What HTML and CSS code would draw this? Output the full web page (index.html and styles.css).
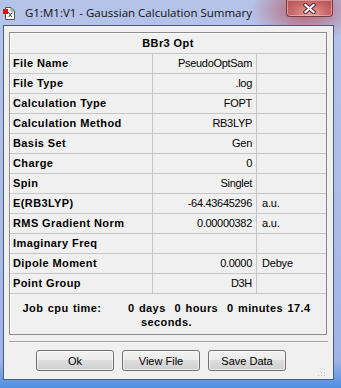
FILE: index.html
```html
<!DOCTYPE html>
<html lang="en">
<head>
  <meta charset="UTF-8">
  <title>G1:M1:V1 - Gaussian Calculation Summary</title>
  <link rel="stylesheet" href="styles.css">
</head>
<body>
  <div class="window">
    <div class="titlebar">
      <svg class="app-icon" width="12" height="13" viewBox="0 0 12 13">
        <path d="M2.5 0.5 H8 L11.5 4 V12.5 H2.5 Z" fill="#fff" stroke="#555" stroke-width="1"/>
        <path d="M8 0.5 V4 H11.5" fill="none" stroke="#777" stroke-width="1"/>
        <path d="M5 5 L7 7.5 L9.5 6 M7 7.5 L6 10 M7 7.5 L9 10" fill="none" stroke="#444" stroke-width="1"/>
        <rect x="0" y="2" width="5" height="5" fill="#e01010"/>
      </svg>
      <span class="title">G1:M1:V1 - Gaussian Calculation Summary</span>
      <div class="close-btn">
        <svg width="13" height="11" viewBox="0 0 13 11">
          <path d="M2.5 2 L10.5 9 M10.5 2 L2.5 9" stroke="#4a2a2a" stroke-width="4.2" stroke-linecap="square"/>
          <path d="M2.5 2 L10.5 9 M10.5 2 L2.5 9" stroke="#fff" stroke-width="2.2" stroke-linecap="square"/>
        </svg>
      </div>
    </div>

    <div class="client">
      <div class="summary">
        <div class="summary-head">BBr3 Opt</div>
        <div class="row"><div class="key">File Name</div><div class="val">PseudoOptSam</div><div class="unit"></div></div>
        <div class="row"><div class="key">File Type</div><div class="val">.log</div><div class="unit"></div></div>
        <div class="row"><div class="key">Calculation Type</div><div class="val">FOPT</div><div class="unit"></div></div>
        <div class="row"><div class="key">Calculation Method</div><div class="val">RB3LYP</div><div class="unit"></div></div>
        <div class="row"><div class="key">Basis Set</div><div class="val">Gen</div><div class="unit"></div></div>
        <div class="row"><div class="key">Charge</div><div class="val">0</div><div class="unit"></div></div>
        <div class="row"><div class="key">Spin</div><div class="val">Singlet</div><div class="unit"></div></div>
        <div class="row"><div class="key">E(RB3LYP)</div><div class="val">-64.43645296</div><div class="unit">a.u.</div></div>
        <div class="row"><div class="key">RMS Gradient Norm</div><div class="val">0.00000382</div><div class="unit">a.u.</div></div>
        <div class="row"><div class="key">Imaginary Freq</div><div class="val"></div><div class="unit"></div></div>
        <div class="row"><div class="key">Dipole Moment</div><div class="val">0.0000</div><div class="unit">Debye</div></div>
        <div class="row"><div class="key">Point Group</div><div class="val">D3H</div><div class="unit"></div></div>
        <div class="cpu">Job cpu time:      0 days  0 hours  0 minutes 17.4<br>seconds.</div>
      </div>

      <div class="sep"></div>

      <div class="buttons">
        <button type="button" class="btn">Ok</button>
        <button type="button" class="btn">View File</button>
        <button type="button" class="btn">Save Data</button>
        <svg class="grip" width="9" height="9" viewBox="0 0 9 9">
          <rect x="7" y="1" width="1" height="1" fill="#b8b8b8"/>
          <rect x="4" y="4" width="1" height="1" fill="#b8b8b8"/>
          <rect x="7" y="4" width="1" height="1" fill="#b8b8b8"/>
          <rect x="1" y="7" width="1" height="1" fill="#b8b8b8"/>
          <rect x="4" y="7" width="1" height="1" fill="#b8b8b8"/>
          <rect x="7" y="7" width="1" height="1" fill="#b8b8b8"/>
        </svg>
      </div>
    </div>
  </div>
</body>
</html>
```

FILE: styles.css
```css
* {
  box-sizing: border-box;
}

html, body {
  margin: 0;
  padding: 0;
}

body {
  width: 341px;
  height: 388px;
  overflow: hidden;
  font-family: "Liberation Sans", Arial, sans-serif;
  font-size: 11px;
  color: #000;
}

.window {
  width: 341px;
  height: 388px;
  display: flex;
  flex-direction: column;
  background:
    radial-gradient(ellipse 55px 32px at 305px 10px, rgba(185, 70, 80, 0.8), rgba(185, 70, 80, 0) 100%),
    linear-gradient(to bottom, #b6c3e9 0%, #aabbe7 60%, #9fb3e6 93%, #4f8fe0 100%);
}

/* title bar */
.titlebar {
  height: 25px;
  display: flex;
  align-items: center;
  flex-shrink: 0;
}

.app-icon {
  margin-left: 3px;
  margin-top: 1px;
}

.title {
  margin-left: 10px;
  font-family: "Open Sans", "Noto Sans", sans-serif;
  font-size: 11.5px;
  color: #111;
  white-space: nowrap;
}

.close-btn {
  margin-left: auto;
  margin-right: 8px;
  align-self: flex-start;
  width: 47px;
  height: 17px;
  border: 1px solid #7a3b40;
  border-top: none;
  border-radius: 0 0 4px 4px;
  background: radial-gradient(ellipse at 50% 80%, #e9a0a0 0%, #c9676a 55%, #b34d52 100%);
  box-shadow: inset 0 0 0 1px rgba(255, 220, 220, 0.45);
  display: flex;
  align-items: center;
  justify-content: center;
}

/* client area */
.client {
  flex: 1;
  margin: 0 7px 8px 3px;
  border: 1px solid #4b5d7d;
  background: #f0f0f0;
  padding: 6px 6px 0 5px;
  display: flex;
  flex-direction: column;
}

.summary {
  border: 1px solid #8a8a8a;
  box-shadow: inset 1px 1px 0 #fff;
  height: 303px;
  display: flex;
  flex-direction: column;
}

.summary-head {
  height: 21px;
  border-bottom: 1px solid #c6c6c6;
  font-weight: bold;
  letter-spacing: 0.4px;
  text-align: center;
  line-height: 21px;
}

.row {
  height: 20px;
  display: grid;
  grid-template-columns: 143px 104px 1fr;
  border-bottom: 1px solid #c6c6c6;
  line-height: 19px;
}

.key {
  font-weight: bold;
  letter-spacing: 0.4px;
  padding-left: 3px;
  border-right: 1px solid #c6c6c6;
  white-space: nowrap;
}

.val {
  text-align: right;
  letter-spacing: -0.3px;
  padding-right: 4px;
  border-right: 1px solid #c6c6c6;
  white-space: nowrap;
}

.unit {
  padding-left: 5px;
  letter-spacing: -0.2px;
  white-space: nowrap;
}

.cpu {
  flex: 1;
  display: flex;
  align-items: center;
  justify-content: center;
  text-align: center;
  font-weight: bold;
  letter-spacing: 0.4px;
  word-spacing: 1px;
  line-height: 14px;
  white-space: pre;
  padding-top: 1px;
  padding-right: 3px;
}

.sep {
  height: 2px;
  margin-top: 6px;
  border-top: 1px solid #a0a0a0;
  border-bottom: 1px solid #fff;
  width: 319px;
}

.buttons {
  display: flex;
  gap: 8px;
  padding-left: 27px;
  margin-top: 7px;
}

.btn {
  width: 78px;
  height: 21px;
  padding: 0;
  font-family: "Liberation Sans", Arial, sans-serif;
  font-size: 11px;
  color: #000;
  border: 1px solid #707070;
  border-radius: 3px;
  background: linear-gradient(to bottom, #f2f2f2 0%, #ebebeb 49%, #dddddd 50%, #cfcfcf 100%);
  box-shadow: inset 0 0 0 1px rgba(255, 255, 255, 0.6);
}

.grip {
  margin-left: auto;
  margin-right: 1px;
  align-self: flex-end;
  margin-bottom: -6px;
}
```
